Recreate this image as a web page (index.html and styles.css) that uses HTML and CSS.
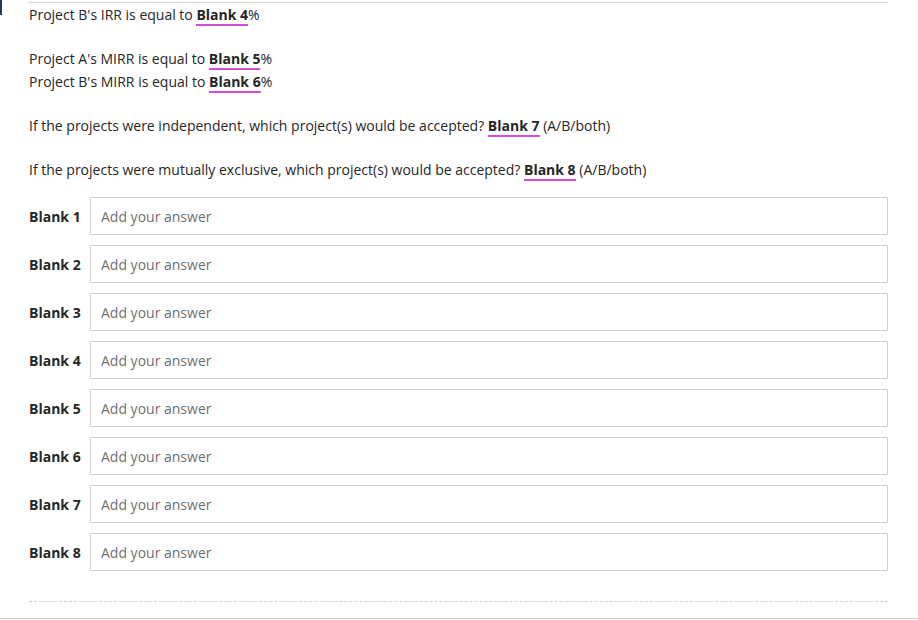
FILE: index.html
```html
<!DOCTYPE html>
<html>
<head>
<meta charset="utf-8">
<link rel="stylesheet" href="styles.css">
</head>
<body>
<div class="marker"></div>
<div class="question">
  <p class="para">Project B's IRR is equal to <span class="blank">Blank 4</span>%</p>
  <p class="para">Project A's MIRR is equal to <span class="blank">Blank 5</span>%<br>Project B's MIRR is equal to <span class="blank">Blank 6</span>%</p>
  <p class="para">If the projects were independent, which project(s) would be accepted? <span class="blank">Blank 7</span> (A/B/both)</p>
  <p class="para">If the projects were mutually exclusive, which project(s) would be accepted? <span class="blank">Blank 8</span> (A/B/both)</p>
  <div class="answers">
    <label class="row"><span class="label">Blank 1</span><input class="field" type="text" placeholder="Add your answer"></label>
    <label class="row"><span class="label">Blank 2</span><input class="field" type="text" placeholder="Add your answer"></label>
    <label class="row"><span class="label">Blank 3</span><input class="field" type="text" placeholder="Add your answer"></label>
    <label class="row"><span class="label">Blank 4</span><input class="field" type="text" placeholder="Add your answer"></label>
    <label class="row"><span class="label">Blank 5</span><input class="field" type="text" placeholder="Add your answer"></label>
    <label class="row"><span class="label">Blank 6</span><input class="field" type="text" placeholder="Add your answer"></label>
    <label class="row"><span class="label">Blank 7</span><input class="field" type="text" placeholder="Add your answer"></label>
    <label class="row"><span class="label">Blank 8</span><input class="field" type="text" placeholder="Add your answer"></label>
  </div>
  <div class="dashed"></div>
</div>
<div class="bottom"></div>
</body>
</html>
```

FILE: styles.css
```css
html, body {
  margin: 0;
  padding: 0;
  background: #fff;
}
body {
  font-family: "Open Sans", "Liberation Sans", sans-serif;
  font-size: 14px;
  color: #262626;
  width: 918px;
  height: 620px;
  overflow: hidden;
  position: relative;
}
.marker {
  position: absolute;
  left: 0;
  top: 0;
  width: 2px;
  height: 15px;
  background: #1d3a66;
}
.question {
  margin: 2px 30px 0 29px;
  border-top: 1px solid #d4d4d4;
}
.para {
  margin: 0 0 21px 0;
  line-height: 23px;
}
.blank {
  font-weight: 700;
  border-bottom: 2px solid #d24fd8;
}
.answers {
  margin-top: -5px;
  display: flex;
  flex-direction: column;
  gap: 10px;
}
.row {
  display: flex;
  align-items: center;
  gap: 10px;
}
.label {
  font-weight: 700;
  width: 51px;
  white-space: nowrap;
}
.field {
  flex: 1;
  height: 38px;
  box-sizing: border-box;
  border: 1px solid #cfcfcf;
  border-radius: 1px;
  padding: 0 10px;
  font-family: "Open Sans", "Liberation Sans", sans-serif;
  font-size: 14px;
  color: #262626;
  background: #fff;
  outline: none;
}
.field::placeholder {
  color: #6f6f6f;
}
.dashed {
  margin-top: 30px;
  border-top: 1px dashed #cfcfcf;
}
.bottom {
  position: absolute;
  left: 0;
  right: 0;
  top: 618px;
  border-top: 1px solid #cfcfcf;
}
```
